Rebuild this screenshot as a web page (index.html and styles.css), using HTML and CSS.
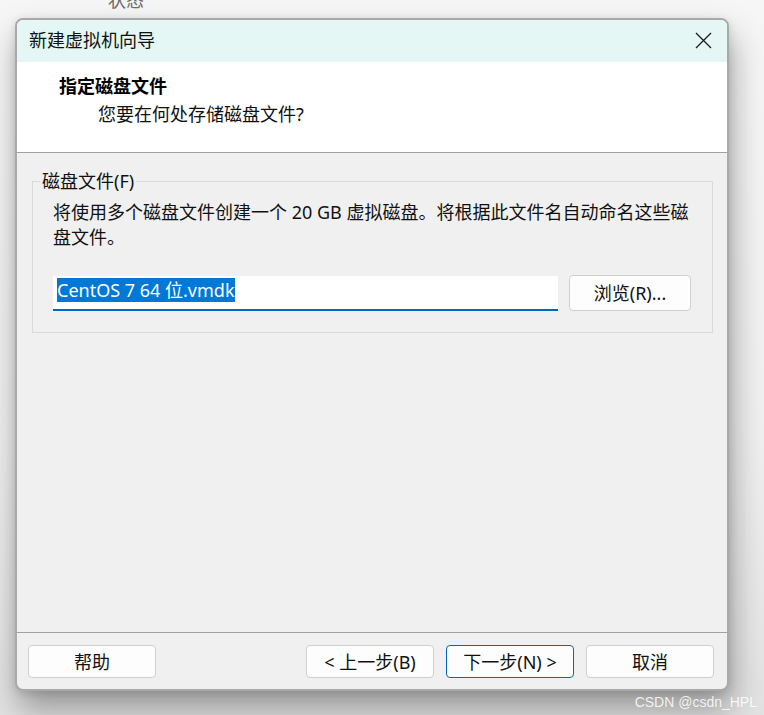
FILE: index.html
```html
<!DOCTYPE html>
<html lang="zh-CN">
<head>
<meta charset="utf-8">
<title>新建虚拟机向导</title>
<link rel="stylesheet" href="styles.css">
</head>
<body>
<div class="top"><span class="top-label">状态</span></div>
<div class="dialog">
  <div class="titlebar">
    <span class="title">新建虚拟机向导</span>
    <svg class="close" width="17" height="17" viewBox="0 0 17 17"><path d="M1 1 L16 16 M16 1 L1 16" stroke="#1b1b1b" stroke-width="1.3" fill="none"/></svg>
  </div>
  <div class="header">
    <div class="h-title">指定磁盘文件</div>
    <div class="h-sub">您要在何处存储磁盘文件?</div>
  </div>
  <div class="content">
    <fieldset class="group">
      <legend class="legend">磁盘文件(F)</legend>
      <p class="desc">将使用多个磁盘文件创建一个 20 GB 虚拟磁盘。将根据此文件名自动命名这些磁<br>盘文件。</p>
      <div class="row">
        <div class="field"><span class="sel">CentOS 7 64 位.vmdk</span></div>
        <div class="btn browse">浏览(R)...</div>
      </div>
    </fieldset>
  </div>
  <div class="footer">
    <div class="btn">帮助</div>
    <div class="spacer"></div>
    <div class="btn">&lt; 上一步(B)</div>
    <div class="btn primary">下一步(N) &gt;</div>
    <div class="btn">取消</div>
  </div>
</div>
<div class="watermark">CSDN @csdn_HPL</div>
</body>
</html>
```
FILE: styles.css
```css
html, body {
  margin: 0;
  padding: 0;
}
body {
  width: 764px;
  height: 715px;
  overflow: hidden;
  background: linear-gradient(180deg, #f6f6f6 0%, #f0f0f0 60%, #e2e2e2 100%);
  font-family: "Noto Sans", "Noto Sans CJK SC", sans-serif;
  font-size: 18px;
  color: #111;
  position: relative;
}
.top {
  height: 18px;
  padding-left: 108px;
  overflow: hidden;
}
.top-label {
  display: block;
  margin-top: -9px;
  font-size: 18px;
  line-height: 18px;
  color: #6a6a6a;
}
.dialog {
  margin-left: 15px;
  width: 714px;
  height: 673px;
  box-sizing: border-box;
  border: 2px solid #a9a9a9;
  border-radius: 8px;
  overflow: hidden;
  background: #f0f0f0;
  display: flex;
  flex-direction: column;
  box-shadow: 3px 18px 32px rgba(0,0,0,0.34), 0 2px 8px rgba(0,0,0,0.12);
}
.titlebar {
  height: 42px;
  box-sizing: border-box;
  background: #e4f7f4;
  display: flex;
  align-items: flex-start;
  justify-content: space-between;
  padding: 8px 15px 0 12px;
  flex: none;
}
.title {
  line-height: 24px;
  color: #111;
}
.close {
  margin-top: 4px;
}
.header {
  box-sizing: border-box;
  background: #ffffff;
  border-bottom: 1px solid #a0a0a0;
  padding: 13px 0 0 42px;
  flex: none;
  height: 91px;
}
.h-title {
  font-weight: 700;
  line-height: 22px;
  color: #000;
}
.h-sub {
  margin-top: 6px;
  margin-left: 39px;
  line-height: 22px;
  color: #111;
}
.content {
  flex: 1;
  padding: 18px 14px 0 15px;
}
.group {
  margin: 0;
  border: 1px solid #dadada;
  padding: 9px 21px 21px 20px;
}
.legend {
  margin-left: -13px;
  padding: 0 2px;
  line-height: 20px;
  color: #111;
}
.desc {
  margin: 0;
  line-height: 25px;
  white-space: nowrap;
  color: #111;
}
.row {
  margin-top: 26px;
  display: flex;
  align-items: flex-start;
  gap: 11px;
}
.field {
  flex: 1;
  height: 35px;
  box-sizing: border-box;
  background: #ffffff;
  border-bottom: 2px solid #0067c0;
  padding: 2px 0 0 4px;
  line-height: 24px;
}
.sel {
  background: #0078d7;
  color: #ffffff;
}
.btn {
  width: 128px;
  height: 33px;
  box-sizing: border-box;
  background: #fdfdfd;
  border: 1px solid #cfcfcf;
  border-radius: 4px;
  display: flex;
  align-items: center;
  justify-content: center;
  line-height: 20px;
  color: #111;
  flex: none;
}
.browse {
  width: 122px;
  height: 36px;
  margin-top: -1px;
}
.primary {
  border-color: #0067c0;
}
.footer {
  flex: none;
  height: 57px;
  box-sizing: border-box;
  border-top: 1px solid #a0a0a0;
  padding: 12px 13px 0 11px;
  display: flex;
  align-items: flex-start;
  gap: 12px;
}
.spacer {
  flex: 1;
}
.watermark {
  position: absolute;
  right: 7px;
  bottom: 5px;
  font-family: "Liberation Sans", sans-serif;
  font-size: 14px;
  line-height: 16px;
  color: rgba(255,255,255,0.85);
}
```
